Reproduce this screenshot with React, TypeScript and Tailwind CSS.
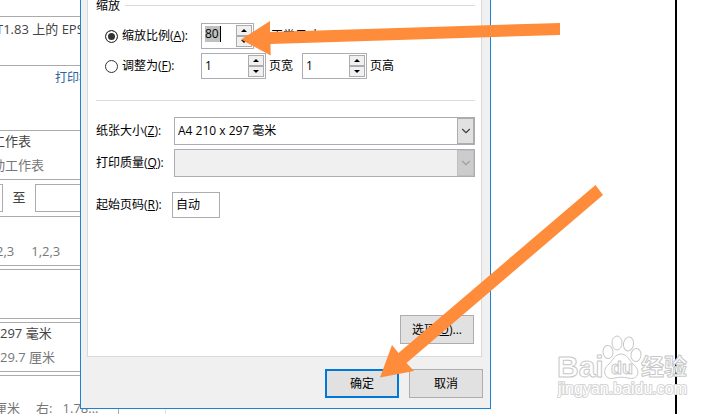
import React from 'react';
import { ChevronDown } from 'lucide-react';

interface SpinnerProps {
  label: string;
  value: string;
  selected?: boolean;
}

const Spinner: React.FC<SpinnerProps> = ({ label, value, selected }) => (
  <div
    className={
      selected
        ? 'flex h-[26px] w-[53px] justify-between border border-[#abadb3] bg-white p-px'
        : 'flex h-[26px] w-[65px] justify-between border border-[#abadb3] bg-white p-px'
    }
  >
    <input
      type="text"
      aria-label={label}
      defaultValue={value}
      className={
        selected
          ? 'mt-px ml-0.5 h-4 w-4 border-r border-black bg-[#c0c0c0] outline-none'
          : 'mt-px ml-0.5 h-[18px] w-10 outline-none'
      }
    />
    <div className="flex w-4 flex-col">
      <button type="button" aria-label={`${label} +`} className="flex flex-1 items-center justify-center border border-[#acacac] bg-[#f0f0f0]">
        <svg width="6" height="3" viewBox="0 0 6 3"><path d="M3 0 6 3H0z" /></svg>
      </button>
      <button type="button" aria-label={`${label} -`} className="flex flex-1 items-center justify-center border border-[#acacac] bg-[#f0f0f0]">
        <svg width="6" height="3" viewBox="0 0 6 3"><path d="M0 0h6L3 3z" /></svg>
      </button>
    </div>
  </div>
);

const Radio: React.FC<{ id: string; checked?: boolean }> = ({ id, checked }) => (
  <input
    id={id}
    type="radio"
    name="scaling"
    defaultChecked={checked}
    className="size-[13px] shrink-0 appearance-none rounded-full border border-[#333] bg-white checked:bg-[#333] checked:shadow-[inset_0_0_0_2px_white]"
  />
);

const SettingBox: React.FC<{ children?: React.ReactNode }> = ({ children }) => (
  <div className="flex h-[50px] w-full flex-col justify-center border-y border-r border-[#ababab] pb-1">
    {children}
  </div>
);

// Print settings column, partly covered by the dialog
const PrintPane: React.FC = () => (
  <aside className="h-full w-[166px] shrink-0 overflow-hidden border-r border-[#e1e1e1] pt-4 text-[13px] leading-6 whitespace-nowrap text-[#444]">
    <div className="flex w-[119px] flex-col">
      <SettingBox>
        <p className="-ml-1 mb-5">T1.83 上的 EPS</p>
      </SettingBox>
      <a href="#printer" className="mb-10 ml-[55px] text-[12px] text-[#2b6496]">打印机</a>
      <SettingBox>
        <p className="-ml-2">工作表</p>
        <p className="-ml-2 text-[#777]">动工作表</p>
      </SettingBox>
      <div className="my-1 flex h-7 items-center">
        <input type="text" aria-label="页数" className="h-7 w-[3px] border border-l-0 border-[#ababab]" />
        <span className="w-8 pb-0.5 text-center">至</span>
        <input type="text" aria-label="至" className="h-7 min-w-0 flex-1 border border-[#ababab]" />
      </div>
      <SettingBox>
        <p className="mt-6 -ml-1 flex gap-[17px] text-[#777]">
          <span>2,3</span>
          <span>1,2,3</span>
        </p>
      </SettingBox>
      <div className="mt-[3px] flex flex-col gap-[3px]">
        <SettingBox />
        <SettingBox>
          <p>297 毫米</p>
          <p className="text-[#777]">29.7 厘米</p>
        </SettingBox>
        <SettingBox>
          <p className="mt-5 -ml-1.5 flex gap-4 text-[#777]">
            <span>厘米</span>
            <span>右:&nbsp;&nbsp; 1.78...</span>
          </p>
        </SettingBox>
      </div>
    </div>
  </aside>
);

const PageSetupDialog: React.FC = () => (
  <form className="absolute top-0 left-20 w-[411px] border border-t-0 border-[#1883d7] bg-[#f0f0f0] pr-2 pb-2.5 pl-1.5 text-[12px] leading-4 text-black">
    <div className="flex flex-col border border-t-0 border-[#d9d9d9] bg-white pr-1.5 pb-3 pl-2">
      <div className="flex h-[11px] items-center gap-[5px]">
        <span>缩放</span>
        <hr className="flex-1 border-[#dcdcdc]" />
      </div>

      <div className="mt-3 flex items-center pl-[9px]">
        <div className="flex w-24 items-center gap-1">
          <Radio id="scale" checked />
          <label htmlFor="scale">缩放比例(<u>A</u>):</label>
        </div>
        <Spinner label="缩放比例" value="80" selected />
        <span className="ml-1">% 正常尺寸</span>
      </div>

      <div className="mt-1 flex items-center pl-[9px]">
        <div className="flex w-24 items-center gap-1">
          <Radio id="fit" />
          <label htmlFor="fit">调整为(<u>F</u>):</label>
        </div>
        <Spinner label="页宽" value="1" />
        <span className="mr-[9px] ml-[3px]">页宽</span>
        <Spinner label="页高" value="1" />
        <span className="ml-[3px]">页高</span>
      </div>

      <hr className="mt-[21px] border-[#dcdcdc]" />

      <div className="mt-4 flex items-center">
        <label htmlFor="paper" className="w-[78px]">纸张大小(<u>Z</u>):</label>
        <div className="relative flex-1">
          <select id="paper" className="block h-7 w-full appearance-none border border-[#abadb3] bg-white pl-[3px]">
            <option>A4 210 x 297 毫米</option>
          </select>
          <span className="pointer-events-none absolute inset-y-px right-px flex w-[17px] items-center justify-center border border-[#acacac] bg-[#e1e1e1]">
            <ChevronDown className="size-3.5 shrink-0 text-[#444]" />
          </span>
        </div>
      </div>

      <div className="mt-1 flex items-center">
        <label htmlFor="quality" className="w-[78px]">打印质量(<u>Q</u>):</label>
        <div className="relative flex-1">
          <select id="quality" disabled className="block h-7 w-full appearance-none border border-[#abadb3] bg-[#f0f0f0] pl-[3px] opacity-100">
            <option></option>
          </select>
          <span className="pointer-events-none absolute inset-y-px right-px flex w-[17px] items-center justify-center border border-[#bfbfbf] bg-[#cccccc]">
            <ChevronDown className="size-3.5 shrink-0 text-[#a0a0a0]" />
          </span>
        </div>
      </div>

      <div className="mt-[15px] flex items-center">
        <label htmlFor="first" className="w-[76px]">起始页码(<u>R</u>):</label>
        <input id="first" type="text" defaultValue="自动" className="h-[26px] w-12 border border-[#abadb3] bg-white px-[3px] pb-0.5" />
      </div>

      <button type="button" className="mt-[97px] mr-px h-[29px] w-[74px] self-end border border-[#adadad] bg-[#e1e1e1]">
        选项(<u>O</u>)...
      </button>
    </div>

    <div className="-mr-px mt-3 flex justify-end gap-2.5">
      <button type="button" className="h-[29px] w-[74px] border-2 border-[#0078d7] bg-[#e1e1e1]">确定</button>
      <button type="button" className="h-[29px] w-[74px] border border-[#adadad] bg-[#e1e1e1]">取消</button>
    </div>
  </form>
);

const Watermark: React.FC = () => (
  <svg
    className="absolute right-[38px] bottom-3 h-[68px] w-[132px]"
    viewBox="0 0 132 68"
    fill="white"
    stroke="#c8c8c8"
    strokeLinejoin="round"
    fontFamily="'Liberation Sans', 'Noto Sans CJK SC', sans-serif"
  >
    <g fontWeight="bold" strokeWidth="1">
      <text x="0" y="43" fontSize="30">Bai</text>
      <text x="84" y="41" fontSize="23">经验</text>
    </g>
    <g strokeWidth="1">
      <ellipse cx="51" cy="18" rx="5" ry="6.5" transform="rotate(-8 51 18)" />
      <ellipse cx="60" cy="9" rx="5" ry="7" />
      <ellipse cx="71.500" cy="10" rx="5" ry="7" transform="rotate(8 71.500 10)" />
      <ellipse cx="79" cy="21" rx="5" ry="6.5" transform="rotate(8 79 21)" />
      <path d="M64 20c-6 0-8 6-12 10-4 3-5 7-4 10 2 5 6 5 10 4 5-1 8-1 13 0 5 1 9 0 10-5 0-4-2-6-5-9-4-4-6-10-12-10z" />
    </g>
    <text x="54" y="40" fontSize="18" fontWeight="bold" strokeWidth="1">du</text>
    <text x="1" y="60" fontSize="16" stroke="#d4d4d4" strokeWidth="2" paintOrder="stroke">jingyan.baidu.com</text>
  </svg>
);

export default function App() {
  return (
    <main className="relative flex h-screen overflow-hidden bg-white font-['Open_Sans','Noto_Sans_CJK_SC',sans-serif]">
      <PrintPane />
      <div className="mr-[50px] flex-1 border-r-2 border-black" />
      <PageSetupDialog />
      <Watermark />
      {/* Pointer arrows */}
      <svg className="pointer-events-none absolute top-0 left-0" width="727" height="414" viewBox="0 0 727 414" fill="#ff8c3a">
        <path d="M241 39.5 270 21v11l290-9v12l-289.500 9 .2 11.500z" />
        <path d="M380 377.500 392 345l6.500 8L595.500 185l7.500 10L406.500 363l7.500 8z" />
      </svg>
    </main>
  );
}
